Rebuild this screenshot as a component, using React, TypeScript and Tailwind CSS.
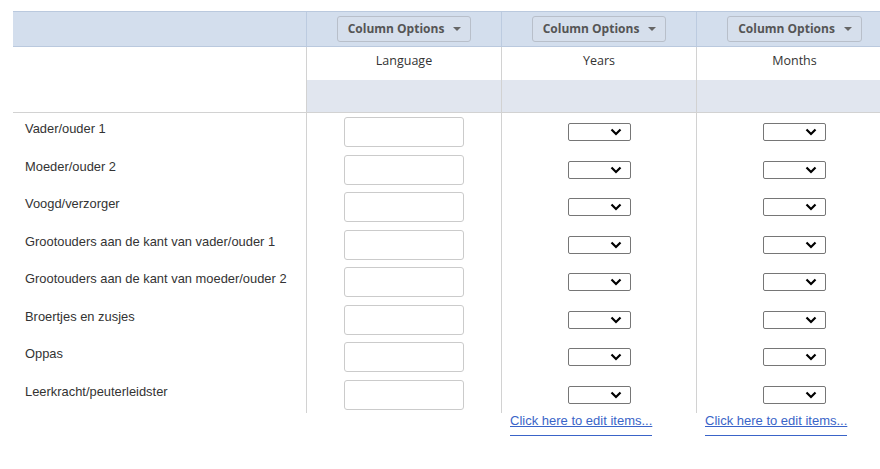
import React from 'react';

const rows = [
  'Vader/ouder 1',
  'Moeder/ouder 2',
  'Voogd/verzorger',
  'Grootouders aan de kant van vader/ouder 1',
  'Grootouders aan de kant van moeder/ouder 2',
  'Broertjes en zusjes',
  'Oppas',
  'Leerkracht/peuterleidster',
];

const cols = ['Language', 'Years', 'Months'];

function ColumnOptions() {
  return (
    <button className="flex items-center gap-[9px] h-[26px] pl-[10px] pr-[9px] rounded-[3px] border border-[#b8bfca] bg-[#d6dfec] text-[12px] font-bold text-[#555] [font-family:'Open_Sans',sans-serif]">
      Column Options
      <svg width="8" height="4" viewBox="0 0 8 4">
        <path d="M0 0h8L4 4z" fill="#666" />
      </svg>
    </button>
  );
}

function Select() {
  return (
    <div className="w-[63px] h-[18px] border border-[#767676] rounded-[2px] bg-white flex items-center justify-end pr-[8px]">
      <svg width="12" height="8" viewBox="0 0 12 8">
        <path d="M1.5 1.5L6 6l4.5-4.5" fill="none" stroke="#000" strokeWidth="2.2" />
      </svg>
    </div>
  );
}

export default function App() {
  return (
    <div className="w-[880px] h-[469px] overflow-hidden bg-white pt-[11px] pl-[13px] text-[13px] text-[#333] [font-family:'Liberation_Sans',Arial,sans-serif]">
      <div className="w-[879px]">
        {/* header with column option buttons */}
        <div className="grid grid-cols-[294px_195px_195px_195px] h-[36px] bg-[#d3deed] border-t border-b border-[#bac9de]">
          <div className="border-r border-[#bccbe0]" />
          {cols.map((c, i) => (
            <div key={c} className={`flex items-center justify-center ${i < 2 ? 'border-r border-[#bccbe0]' : ''}`}>
              <ColumnOptions />
            </div>
          ))}
        </div>

        {/* column labels */}
        <div className="grid grid-cols-[294px_195px_195px_195px] border-b border-[#d2d2d2]">
          <div className="border-r border-[#d2d2d2] h-[65px]" />
          {cols.map((c, i) => (
            <div key={c} className={`flex flex-col ${i < 2 ? 'border-r border-[#d2d2d2]' : ''}`}>
              <div className="h-[33px] flex justify-center pt-[5px] text-[#333] [font-family:'Open_Sans',sans-serif] text-[12.5px]">{c}</div>
              <div className="h-[32px] bg-[#e1e6ef]" />
            </div>
          ))}
        </div>

        {/* body rows */}
        {rows.map(r => (
          <div key={r} className="grid grid-cols-[294px_195px_195px_195px] h-[37.5px]">
            <div className="border-r border-[#d2d2d2] pl-[12px] pt-[8px] leading-[16px] text-[12.9px]">{r}</div>
            <div className="border-r border-[#d2d2d2] flex justify-center pt-[4px]">
              <div className="w-[120px] h-[30px] border border-[#cbcbcb] rounded-[3px] bg-white" />
            </div>
            <div className="border-r border-[#d2d2d2] flex justify-center pt-[10px]">
              <Select />
            </div>
            <div className="flex justify-center pt-[10px]">
              <Select />
            </div>
          </div>
        ))}

        {/* edit links */}
        <div className="grid grid-cols-[294px_195px_195px_195px]">
          <div />
          <div />
          {[0, 1].map(i => (
            <div key={i} className="pl-[8px] flex items-start mt-[1px]">
              <a href="#" className="block underline text-[#3a64c8] border-b border-[#3a64c8] pb-[7px] leading-[14px]">
                Click here to edit items...
              </a>
            </div>
          ))}
        </div>
      </div>
    </div>
  );
}
